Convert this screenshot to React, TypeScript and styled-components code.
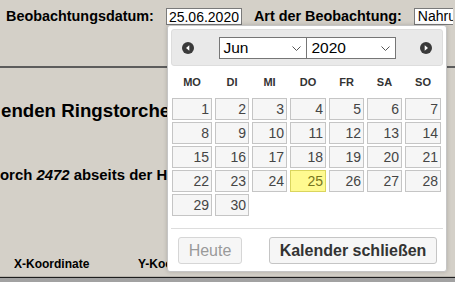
import React from "react";
import styled, { createGlobalStyle } from "styled-components";

const Global = createGlobalStyle`
  html, body { margin: 0; padding: 0; }
  body { font-family: "Liberation Sans", Arial, sans-serif; background: #d4d0c8; }
`;

const Page = styled.div`
  position: relative;
  width: 455px;
  height: 282px;
  overflow: hidden;
  background: #d4d0c8;
  display: flex;
  flex-direction: column;
  color: #000;
  font-family: "Liberation Sans", Arial, sans-serif;
`;

const TopBar = styled.div`
  display: flex;
  align-items: flex-start;
  height: 66px;
  box-sizing: border-box;
  padding: 8px 0 0 6px;
  white-space: nowrap;
  flex-shrink: 0;
`;

const Label = styled.label`
  font-size: 14.4px;
  font-weight: bold;
  line-height: 14px;
  margin: 1px 12px 0 0;
`;

const DateInput = styled.input`
  box-sizing: border-box;
  width: 76px;
  height: 17px;
  margin: 0 12px 0 0;
  padding: 0 2px;
  border: 1px solid #7a7a7a;
  background: #fff;
  font-family: "Liberation Sans", Arial, sans-serif;
  font-size: 14px;
  color: #000;
  outline: none;
`;

const TypeSelect = styled.div`
  box-sizing: border-box;
  width: 39px;
  height: 17px;
  padding: 0 0 0 3px;
  border: 1px solid #7a7a7a;
  border-right: none;
  background: #fff;
  font-size: 14px;
  line-height: 15px;
  flex-shrink: 0;
  overflow: hidden;
`;

const Rule = styled.div`
  height: 2px;
  background: #5c5c5c;
  flex-shrink: 0;
`;

const Headline = styled.h2`
  margin: 32px 0 0 1px;
  max-width: 166px;
  overflow: hidden;
  font-size: 18.7px;
  line-height: 22px;
  font-weight: bold;
  white-space: nowrap;
`;

const Paragraph = styled.p`
  margin: 44px 0 0 0;
  max-width: 167px;
  overflow: hidden;
  font-size: 14.9px;
  line-height: 18px;
  font-weight: bold;
  white-space: nowrap;
`;

const CoordRow = styled.div`
  display: grid;
  grid-template-columns: 124px 29px;
  margin-top: 73px;
  padding-left: 14px;
  font-size: 12px;
  line-height: 14px;
  font-weight: bold;
  white-space: nowrap;
  overflow: hidden;
`;

const CoordLabel = styled.span`
  overflow: hidden;
`;

const Footer = styled.div`
  margin-top: 6px;
  flex: 1;
  border-top: 1px solid #1e1e1e;
  box-shadow: 0 -1px 0 #b8b4ad;
  background: #a2a2a2;
`;

const Popup = styled.div`
  position: absolute;
  left: 167px;
  top: 25px;
  width: 280px;
  height: 247px;
  box-sizing: border-box;
  padding: 3px;
  background: #fff;
  border: 1px solid #c5c5c5;
  border-radius: 3px;
  box-shadow: 0 0 4px rgba(0, 0, 0, 0.18);
  display: flex;
  flex-direction: column;
  z-index: 10;
`;

const Header = styled.div`
  box-sizing: border-box;
  height: 37px;
  border: 1px solid #dddddd;
  border-radius: 3px;
  background: #e9e9e9;
  display: flex;
  align-items: center;
  justify-content: space-between;
  padding: 0 10px;
`;

const NavIcon = styled.svg`
  width: 12px;
  height: 12px;
  display: block;
`;

const SelectGroup = styled.div`
  display: flex;
  align-items: center;
`;

const SelectBox = styled.div<{ $w: number; $overlap?: boolean }>`
  position: relative;
  box-sizing: border-box;
  width: ${(p) => p.$w}px;
  height: 22px;
  margin-left: ${(p) => (p.$overlap ? "-1px" : "0")};
  border: 1px solid #767676;
  background: #fff;
  padding-left: ${(p) => (p.$overlap ? 5 : 4)}px;
  font-size: 15.5px;
  line-height: 20px;
  color: #000;
`;

const Chevron = styled.svg`
  position: absolute;
  right: 5px;
  top: 8px;
  width: 9px;
  height: 5px;
`;

const Weekdays = styled.div`
  display: grid;
  grid-template-columns: 40px 34px 35px 36px 35px 35px 36px;
  column-gap: 3px;
  margin-left: 1px;
  height: 32px;
  align-items: center;
`;

const Weekday = styled.span`
  text-align: center;
  font-size: 11px;
  font-weight: bold;
  color: #333;
`;

const DaysGrid = styled.div`
  display: grid;
  grid-template-columns: 40px 34px 35px 36px 35px 35px 36px;
  grid-auto-rows: 22px;
  column-gap: 3px;
  row-gap: 2px;
  margin-left: 1px;
`;

const Day = styled.span<{ $active?: boolean }>`
  box-sizing: border-box;
  border: 1px solid ${(p) => (p.$active ? "#dad55e" : "#c5c5c5")};
  background: ${(p) => (p.$active ? "#fffa90" : "#f6f6f6")};
  color: ${(p) => (p.$active ? "#777620" : "#454545")};
  font-size: 14px;
  line-height: 20px;
  text-align: right;
  padding-right: 2px;
`;

const Separator = styled.div`
  margin-top: 12px;
  border-top: 1px solid #dddddd;
`;

const ButtonRow = styled.div`
  display: flex;
  justify-content: space-between;
  padding: 8px 6px 0 7px;
`;

const Button = styled.button<{ $primary?: boolean }>`
  box-sizing: border-box;
  height: 27px;
  width: ${(p) => (p.$primary ? 168 : 64)}px;
  padding: 0;
  border: 1px solid ${(p) => (p.$primary ? "#c5c5c5" : "#d6d6d6")};
  border-radius: 3px;
  background: #f6f6f6;
  color: ${(p) => (p.$primary ? "#333" : "#9a9a9a")};
  font-family: "Liberation Sans", Arial, sans-serif;
  font-size: 16px;
  font-weight: ${(p) => (p.$primary ? "bold" : "normal")};
  line-height: 25px;
`;

const weekdays = ["MO", "DI", "MI", "DO", "FR", "SA", "SO"];
const days = Array.from({ length: 30 }, (_, i) => i + 1);

function ChevronDown() {
  return (
    <Chevron viewBox="0 0 9 5">
      <polyline points="0.5,0.5 4.5,4.5 8.5,0.5" fill="none" stroke="#555" strokeWidth="1" />
    </Chevron>
  );
}

export default function App() {
  return (
    <>
      <Global />
      <Page>
        <TopBar>
          <Label>Beobachtungsdatum:</Label>
          <DateInput readOnly value="25.06.2020" />
          <Label>Art der Beobachtung:</Label>
          <TypeSelect>Nahrungssuche</TypeSelect>
        </TopBar>
        <Rule />
        <Headline>enden Ringstorchen</Headline>
        <Paragraph>
          orch <i>2472</i> abseits der Hauptstraße
        </Paragraph>
        <CoordRow>
          <CoordLabel>X-Koordinate</CoordLabel>
          <CoordLabel>Y-Koordinate</CoordLabel>
        </CoordRow>
        <Footer />

        <Popup>
          <Header>
            <NavIcon viewBox="0 0 12 12">
              <circle cx="6" cy="6" r="6" fill="#3a3a3a" />
              <polygon points="7.3,3.3 7.3,8.7 4,6" fill="#fff" />
            </NavIcon>
            <SelectGroup>
              <SelectBox $w={88}>
                Jun
                <ChevronDown />
              </SelectBox>
              <SelectBox $w={90} $overlap>
                2020
                <ChevronDown />
              </SelectBox>
            </SelectGroup>
            <NavIcon viewBox="0 0 12 12">
              <circle cx="6" cy="6" r="6" fill="#3a3a3a" />
              <polygon points="4.7,3.3 4.7,8.7 8,6" fill="#fff" />
            </NavIcon>
          </Header>
          <Weekdays>
            {weekdays.map((d) => (
              <Weekday key={d}>{d}</Weekday>
            ))}
          </Weekdays>
          <DaysGrid>
            {days.map((d) => (
              <Day key={d} $active={d === 25}>
                {d}
              </Day>
            ))}
          </DaysGrid>
          <Separator />
          <ButtonRow>
            <Button disabled>Heute</Button>
            <Button $primary>Kalender schließen</Button>
          </ButtonRow>
        </Popup>
      </Page>
    </>
  );
}
